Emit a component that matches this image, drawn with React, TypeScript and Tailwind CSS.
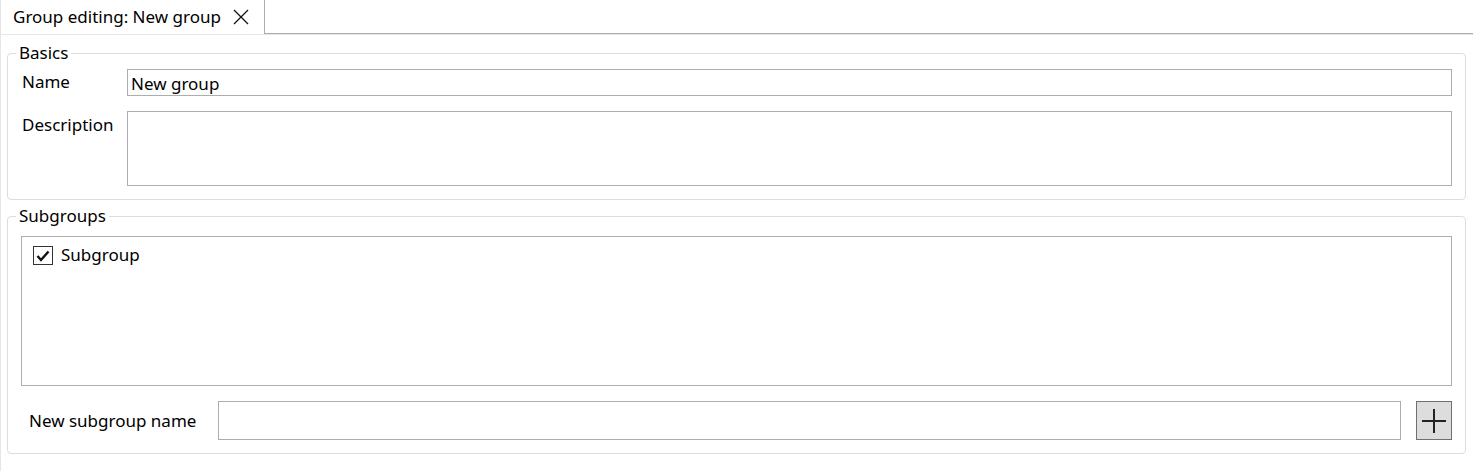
import { useState } from 'react';

export default function App() {
    const [name, setName] = useState('New group');
    const [description, setDescription] = useState('');
    const [newSubgroup, setNewSubgroup] = useState('');
    const [subgroups, setSubgroups] = useState([{ name: 'Subgroup', checked: true }]);

    const addSubgroup = () => {
        if (!newSubgroup.trim()) return;
        setSubgroups([...subgroups, { name: newSubgroup, checked: false }]);
        setNewSubgroup('');
    };

    return (
        <div className="w-[1473px] h-[471px] overflow-hidden bg-white text-[#000] font-['Noto_Sans',sans-serif] text-[17px] flex flex-col">
            {/* tab strip */}
            <div className="flex h-[34px] shrink-0">
                <div className="w-[265px] flex items-center pl-[12px] border-l border-l-[#e3e3e3] border-r border-r-[#acacac] bg-white">
                    <span className="leading-none pb-[1px]">Group editing: New group</span>
                    <svg className="ml-[12px] mt-[-1px]" width="16" height="16" viewBox="0 0 16 16">
                        <path d="M1 1 L15 15 M15 1 L1 15" stroke="#111" strokeWidth="1.3" />
                    </svg>
                </div>
                <div className="flex-1 border-b border-[#acacac]" />
            </div>

            {/* content */}
            <div className="flex-1 border-l border-t border-[#e6e6e6] pl-[6px] pr-[7px] pt-[8px] flex flex-col gap-[6px]">
                {/* Basics */}
                <fieldset className="border border-[#d5dfe5] rounded-[4px] pl-[8px] pr-[13px] pb-[13px] pt-[6px] m-0 min-w-0">
                    <legend className="px-[3px] leading-[20px]">Basics</legend>
                    <div className="grid grid-cols-[105px_1fr] gap-y-[15px] pl-[6px]">
                        <label className="leading-[20px] pt-[3px]">Name</label>
                        <input
                            className="h-[27px] border border-[#abadb3] px-[3px] pt-[2px] outline-none"
                            value={name}
                            onChange={e => setName(e.target.value)}
                        />
                        <label className="leading-[20px] pt-[4px]">Description</label>
                        <textarea
                            className="h-[75px] border border-[#abadb3] px-[3px] outline-none resize-none"
                            value={description}
                            onChange={e => setDescription(e.target.value)}
                        />
                    </div>
                </fieldset>

                {/* Subgroups */}
                <fieldset className="border border-[#d5dfe5] rounded-[4px] pl-[8px] pr-[13px] pb-[13px] pt-[10px] m-0 min-w-0">
                    <legend className="px-[3px] leading-[20px]">Subgroups</legend>
                    <div className="ml-[5px] h-[150px] border border-[#abadb3] pt-[8px] pl-[11px] flex flex-col gap-[4px]">
                        {subgroups.map((s, i) => (
                            <label key={i} className="flex items-center gap-[8px] leading-[20px]">
                                <span
                                    className="w-[20px] h-[19px] border border-[#333] bg-white flex items-center justify-center"
                                    onClick={() => setSubgroups(subgroups.map((x, j) => j === i ? { ...x, checked: !x.checked } : x))}
                                >
                                    {s.checked && (
                                        <svg width="14" height="12" viewBox="0 0 14 12">
                                            <path d="M1.5 6 L5 10 L12.5 1.5" stroke="#111" strokeWidth="2.4" fill="none" />
                                        </svg>
                                    )}
                                </span>
                                <span className="pb-[1px]">{s.name}</span>
                            </label>
                        ))}
                    </div>
                    <div className="flex items-center mt-[15px] ml-[5px]">
                        <label className="w-[197px] pl-[8px] pt-[1px]">New subgroup name</label>
                        <input
                            className="flex-1 h-[39px] border border-[#abadb3] px-[3px] outline-none"
                            value={newSubgroup}
                            onChange={e => setNewSubgroup(e.target.value)}
                        />
                        <button
                            onClick={addSubgroup}
                            className="ml-[15px] w-[36px] h-[39px] bg-[#dddddd] border border-[#707070] flex items-center justify-center"
                        >
                            <svg width="24" height="24" viewBox="0 0 24 24">
                                <path d="M12 0 V24 M0 12 H24" stroke="#222" strokeWidth="2" />
                            </svg>
                        </button>
                    </div>
                </fieldset>
            </div>
        </div>
    );
}
